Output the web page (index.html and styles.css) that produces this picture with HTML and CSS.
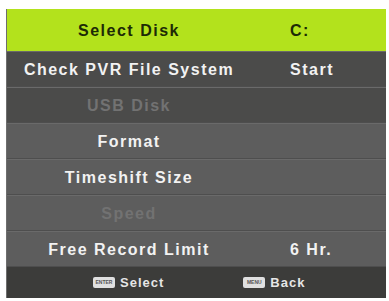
FILE: index.html
```html
<!DOCTYPE html>
<html lang="en">

<head>
    <meta charset="UTF-8">
    <title>PVR File System</title>
    <link rel="stylesheet" href="styles.css">
</head>

<body>
    <div class="menu">
        <div class="row selected">
            <span class="label">Select Disk</span>
            <span class="value">C:</span>
        </div>
        <div class="row dark">
            <span class="label">Check PVR File System</span>
            <span class="value">Start</span>
        </div>
        <div class="row dark disabled">
            <span class="label">USB Disk</span>
            <span class="value"></span>
        </div>
        <div class="row">
            <span class="label">Format</span>
            <span class="value"></span>
        </div>
        <div class="row">
            <span class="label">Timeshift Size</span>
            <span class="value"></span>
        </div>
        <div class="row disabled">
            <span class="label">Speed</span>
            <span class="value"></span>
        </div>
        <div class="row">
            <span class="label">Free Record Limit</span>
            <span class="value">6 Hr.</span>
        </div>

        <div class="footer">
            <div class="hint"><span class="key">ENTER</span> Select</div>
            <div class="hint"><span class="key">MENU</span> Back</div>
        </div>
    </div>
</body>

</html>
```

FILE: styles.css
```css
* {
    margin: 0;
    padding: 0;
    box-sizing: border-box;
}

body {
    font-family: "Liberation Sans", Arial, sans-serif;
    background-color: #ffffff;
    padding: 9px 3px 3px 6px;
}

.menu {
    width: 380px;
    background-color: #5b5b5b;
    border-left: 1px solid #6e6e6e;
}

.row {
    display: flex;
    align-items: center;
    height: 36px;
    padding-top: 2px;
    border-top: 1px solid #6a6a6a;
    border-bottom: 1px solid #4e4e4e;
    font-weight: bold;
    font-size: 16px;
    letter-spacing: 1.5px;
    color: #f2f2f2;
    background-color: #5d5d5d;
}

.row.dark {
    background-color: #4b4b4a;
}

.row.selected {
    height: 42px;
    background-color: #b3e21c;
    color: #1d2a06;
    border: none;
}

.row.disabled {
    color: #727272;
}

.label {
    width: 244px;
    text-align: center;
}

.value {
    padding-left: 39px;
}

.footer {
    display: flex;
    align-items: center;
    height: 31px;
    background-color: #3c3c3a;
    font-weight: bold;
    font-size: 13px;
    letter-spacing: 1px;
    color: #e6e6e6;
}

.hint {
    display: flex;
    align-items: center;
    gap: 5px;
}

.hint:first-child {
    margin-left: 86px;
}

.hint:last-child {
    margin-left: 79px;
}

.key {
    display: inline-block;
    width: 22px;
    height: 11px;
    line-height: 11px;
    background-color: #e0e0e0;
    color: #555;
    border-radius: 2px;
    font-size: 5px;
    letter-spacing: 0;
    text-align: center;
}
```
